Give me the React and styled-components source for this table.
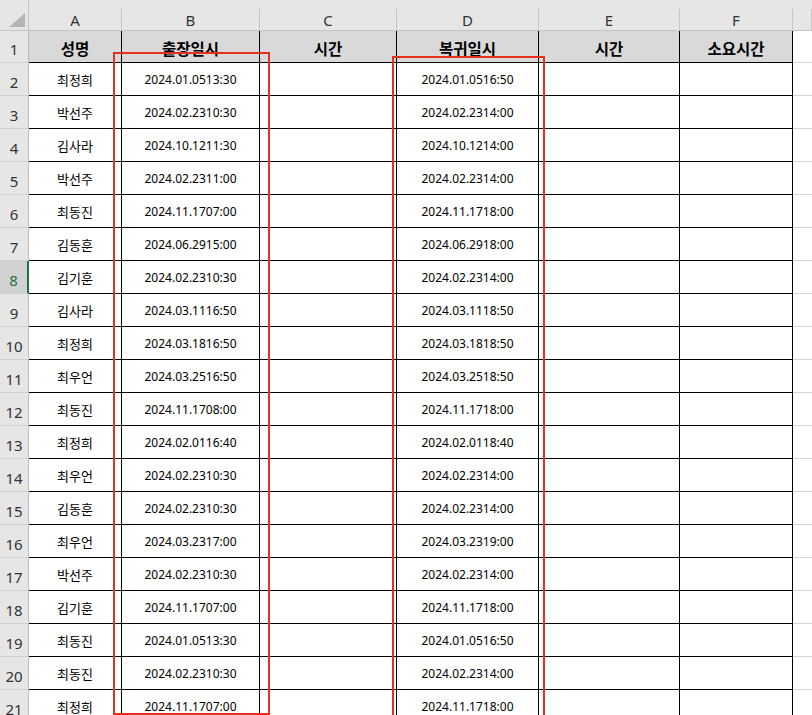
import React from "react";
import styled, { createGlobalStyle, css } from "styled-components";

const GlobalStyle = createGlobalStyle`
  body {
    margin: 0;
    background: #ffffff;
    overflow: hidden;
  }
`;

const COLS = "29px 93px 138px 137px 142px 141px 113px 1fr";

const rows = [
  ["최정희", "2024.01.0513:30", "2024.01.0516:50"],
  ["박선주", "2024.02.2310:30", "2024.02.2314:00"],
  ["김사라", "2024.10.1211:30", "2024.10.1214:00"],
  ["박선주", "2024.02.2311:00", "2024.02.2314:00"],
  ["최동진", "2024.11.1707:00", "2024.11.1718:00"],
  ["김동훈", "2024.06.2915:00", "2024.06.2918:00"],
  ["김기훈", "2024.02.2310:30", "2024.02.2314:00"],
  ["김사라", "2024.03.1116:50", "2024.03.1118:50"],
  ["최정희", "2024.03.1816:50", "2024.03.1818:50"],
  ["최우언", "2024.03.2516:50", "2024.03.2518:50"],
  ["최동진", "2024.11.1708:00", "2024.11.1718:00"],
  ["최정희", "2024.02.0116:40", "2024.02.0118:40"],
  ["최우언", "2024.02.2310:30", "2024.02.2314:00"],
  ["김동훈", "2024.02.2310:30", "2024.02.2314:00"],
  ["최우언", "2024.03.2317:00", "2024.03.2319:00"],
  ["박선주", "2024.02.2310:30", "2024.02.2314:00"],
  ["김기훈", "2024.11.1707:00", "2024.11.1718:00"],
  ["최동진", "2024.01.0513:30", "2024.01.0516:50"],
  ["최동진", "2024.02.2310:30", "2024.02.2314:00"],
  ["최정희", "2024.11.1707:00", "2024.11.1718:00"],
];

const Sheet = styled.div`
  position: relative;
  width: 812px;
  height: 715px;
  overflow: hidden;
  font-family: "Noto Sans", "Noto Sans CJK KR", sans-serif;
  color: #000;
`;

const ColHeader = styled.div`
  display: grid;
  grid-template-columns: ${COLS};
  height: 31px;
  background: #e6e6e6;
  border-bottom: 1px solid #c4c4c4;
  box-sizing: border-box;
`;

const Corner = styled.div`
  display: flex;
  align-items: flex-end;
  justify-content: flex-end;
  padding: 0 3px 3px 0;
  border-right: 1px solid #c6c6c6;
  box-sizing: border-box;
`;

const ColLetter = styled.div`
  align-self: end;
  height: 21px;
  display: flex;
  align-items: center;
  justify-content: center;
  font-size: 15px;
  color: #333;
  border-right: 1px solid #c6c6c6;
  box-sizing: border-box;
`;

const Row = styled.div`
  display: grid;
  grid-template-columns: ${COLS};
  height: ${(p) => (p.$head ? 32 : 33)}px;
`;

const RowNum = styled.div`
  display: flex;
  align-items: flex-end;
  justify-content: center;
  padding-bottom: 3px;
  font-size: 15px;
  color: ${(p) => (p.$active ? "#217346" : "#333")};
  background: ${(p) => (p.$active ? "#d2d2d2" : "#e6e6e6")};
  border-right: ${(p) => (p.$active ? "2px solid #217346" : "1px solid #bdbdbd")};
  border-bottom: 1px solid #d0d0d0;
  box-sizing: border-box;
`;

const Cell = styled.div`
  display: flex;
  align-items: center;
  justify-content: center;
  padding-top: 1px;
  border-right: 1px solid #000;
  border-bottom: 1px solid #000;
  box-sizing: border-box;
  font-size: ${(p) => (p.$date ? "12px" : "13px")};
  ${(p) =>
    p.$head &&
    css`
      background: #d9d9d9;
      font-weight: 700;
      font-size: 15.5px;
      padding-top: 3px;
    `}
`;

const Empty = styled.div`
  border-bottom: 1px solid #d4d4d4;
  box-sizing: border-box;
`;

// red boxes drawn over columns B and D
const Outline = styled.div`
  position: absolute;
  left: ${(p) => p.$x}px;
  top: ${(p) => p.$y}px;
  width: ${(p) => p.$w}px;
  height: ${(p) => p.$h}px;
  border: 2px solid #e2321e;
  box-sizing: border-box;
  pointer-events: none;
`;

function App() {
  const heads = ["성명", "출장일시", "시간", "복귀일시", "시간", "소요시간"];

  return (
    <>
      <GlobalStyle />
      <Sheet>
        <ColHeader>
          <Corner>
            <svg width="16" height="14" viewBox="0 0 16 14">
              <polygon points="16,0 16,14 0,14" fill="#b4b4b4" />
            </svg>
          </Corner>
          {["A", "B", "C", "D", "E", "F"].map((l) => (
            <ColLetter key={l}>{l}</ColLetter>
          ))}
          <ColLetter />
        </ColHeader>

        <Row $head>
          <RowNum>1</RowNum>
          {heads.map((h, i) => (
            <Cell key={i} $head>
              {h}
            </Cell>
          ))}
          <Empty />
        </Row>

        {rows.map((r, i) => (
          <Row key={i}>
            <RowNum $active={i + 2 === 8}>{i + 2}</RowNum>
            <Cell>{r[0]}</Cell>
            <Cell $date>{r[1]}</Cell>
            <Cell />
            <Cell $date>{r[2]}</Cell>
            <Cell />
            <Cell />
            <Empty />
          </Row>
        ))}

        <Outline $x={113} $y={52} $w={157} $h={663} />
        <Outline $x={392} $y={56} $w={153} $h={700} />
      </Sheet>
    </>
  );
}

export default App;
